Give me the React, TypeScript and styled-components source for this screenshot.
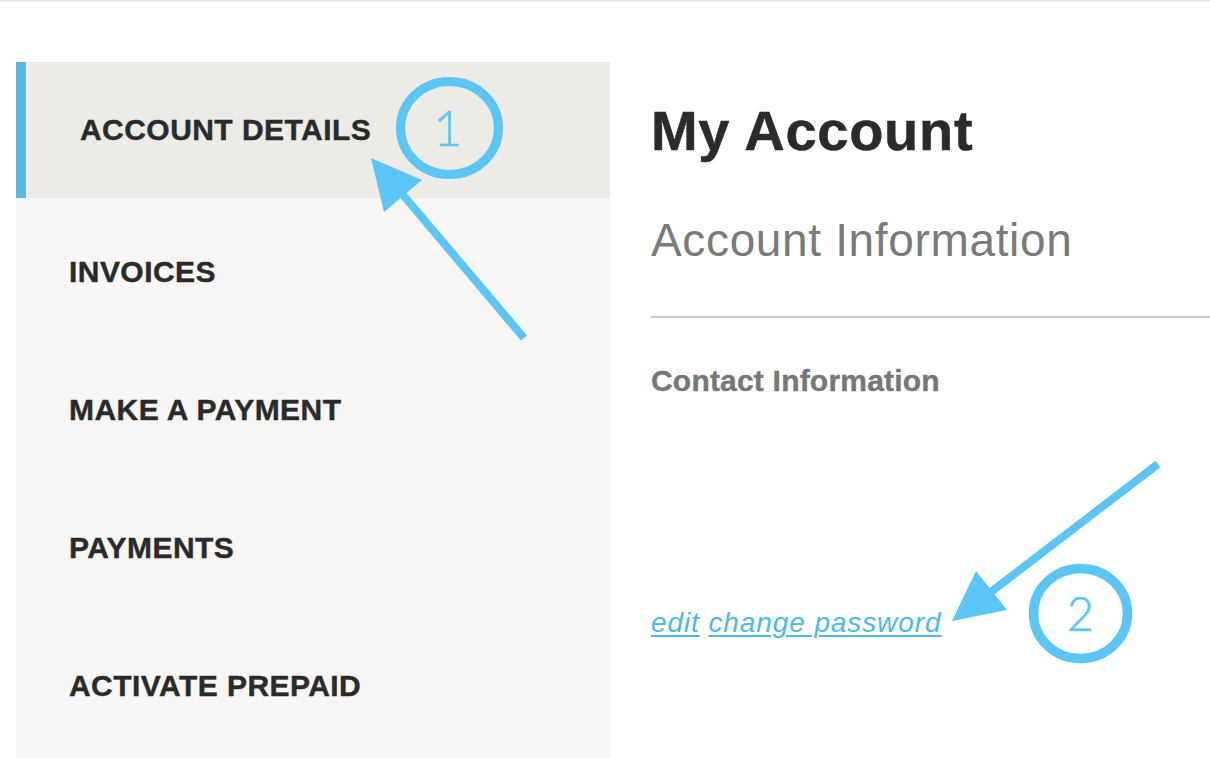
import React from "react";
import styled, { createGlobalStyle } from "styled-components";

const GlobalStyle = createGlobalStyle`
  html, body {
    margin: 0;
    padding: 0;
    background: #ffffff;
    overflow: hidden;
  }
  body {
    font-family: "Liberation Sans", Arial, sans-serif;
  }
`;

const Page = styled.div`
  position: relative;
  width: 1210px;
  height: 758px;
  overflow: hidden;
`;

const TopRule = styled.div`
  height: 2px;
  background: #e9e9e9;
`;

const Layout = styled.div`
  display: flex;
  align-items: flex-start;
  padding: 60px 0 0 16px;
`;

const Sidebar = styled.nav`
  width: 594px;
  flex: none;
  background: #f7f6f4;
  display: flex;
  flex-direction: column;
  padding-bottom: 40px;
`;

const NavItem = styled.a<{ $active?: boolean }>`
  display: flex;
  align-items: center;
  box-sizing: border-box;
  height: ${(p) => (p.$active ? "136px" : "138px")};
  padding: ${(p) => (p.$active ? "0 0 0 54px" : "10px 0 0 53px")};
  border-left: ${(p) => (p.$active ? "10px solid #55b9e6" : "none")};
  background: ${(p) => (p.$active ? "#ecebe6" : "transparent")};
  color: #2a2a2a;
  font-family: "Liberation Sans", Arial, sans-serif;
  font-weight: 700;
  font-size: 30px;
  line-height: 1;
  letter-spacing: 0.45px;
  -webkit-text-stroke: 0.4px #2a2a2a;
  text-transform: uppercase;
  text-decoration: none;
  white-space: nowrap;
`;

const Main = styled.main`
  flex: 1;
  margin-left: 41px;
  padding-top: 41px;
  display: flex;
  flex-direction: column;
`;

const Title = styled.h1`
  margin: 0;
  font-family: "Liberation Sans", Arial, sans-serif;
  font-weight: 700;
  font-size: 56px;
  line-height: 1;
  letter-spacing: 0.7px;
  -webkit-text-stroke: 0.5px #2b2b2b;
  color: #2b2b2b;
`;

const SubTitle = styled.h2`
  margin: 58px 0 0;
  font-family: "Liberation Sans", Arial, sans-serif;
  font-weight: 400;
  font-size: 46px;
  line-height: 1;
  letter-spacing: 0.65px;
  color: #7a7a7a;
`;

const Divider = styled.hr`
  margin: 53px 0 0;
  border: none;
  height: 2px;
  background: #c6c6c6;
`;

const SectionLabel = styled.h3`
  margin: 48px 0 0;
  font-family: "Liberation Sans", Arial, sans-serif;
  font-weight: 700;
  font-size: 30px;
  line-height: 1;
  letter-spacing: 0.2px;
  -webkit-text-stroke: 0.4px #777777;
  color: #777777;
`;

const LinkRow = styled.div`
  margin-top: 213px;
  font-family: "Liberation Sans", Arial, sans-serif;
  font-style: italic;
  font-size: 28px;
  line-height: 1;
  letter-spacing: 0.9px;
  white-space: nowrap;
`;

const TextLink = styled.a`
  color: #4fb8e8;
  text-decoration: underline;
  text-decoration-thickness: 2px;
  text-underline-offset: 3px;
`;

const Overlay = styled.svg`
  position: absolute;
  left: 0;
  top: 0;
  pointer-events: none;
`;

const ANNOT = "#5bc5f5";

const Annotations: React.FC = () => (
  <Overlay width={1210} height={758} viewBox="0 0 1210 758">
    {/* callout 1 */}
    <ellipse cx={449.5} cy={128} rx={49} ry={46.5} fill="none" stroke={ANNOT} strokeWidth={9} />
    <text
      x={448}
      y={146}
      textAnchor="middle"
      fontFamily="Lato, 'Liberation Sans', sans-serif"
      fontWeight={300}
      fontSize={50}
      fill={ANNOT}
      stroke={ANNOT}
      strokeWidth={0.6}
    >
      1
    </text>
    <line x1={524} y1={338} x2={398} y2={189} stroke={ANNOT} strokeWidth={8} />
    <polygon points="371,158 384,212 422,180" fill={ANNOT} />

    {/* callout 2 */}
    <ellipse cx={1080.5} cy={613.5} rx={47} ry={45} fill="none" stroke={ANNOT} strokeWidth={9.5} />
    <text
      x={1080.5}
      y={631}
      textAnchor="middle"
      fontFamily="Lato, 'Liberation Sans', sans-serif"
      fontWeight={300}
      fontSize={47}
      fill={ANNOT}
      stroke={ANNOT}
      strokeWidth={0.6}
    >
      2
    </text>
    <line x1={1158} y1={464} x2={987} y2={595} stroke={ANNOT} strokeWidth={8} />
    <polygon points="952,621 976,571 1007,610" fill={ANNOT} />
  </Overlay>
);

const navItems = ["Account Details", "Invoices", "Make a Payment", "Payments", "Activate Prepaid"];

export default function App() {
  return (
    <Page>
      <GlobalStyle />
      <TopRule />
      <Layout>
        <Sidebar>
          {navItems.map((label, i) => (
            <NavItem key={label} href="#" $active={i === 0}>
              {label}
            </NavItem>
          ))}
        </Sidebar>
        <Main>
          <Title>My Account</Title>
          <SubTitle>Account Information</SubTitle>
          <Divider />
          <SectionLabel>Contact Information</SectionLabel>
          <LinkRow>
            <TextLink href="#">edit</TextLink> <TextLink href="#">change password</TextLink>
          </LinkRow>
        </Main>
      </Layout>
      <Annotations />
    </Page>
  );
}
